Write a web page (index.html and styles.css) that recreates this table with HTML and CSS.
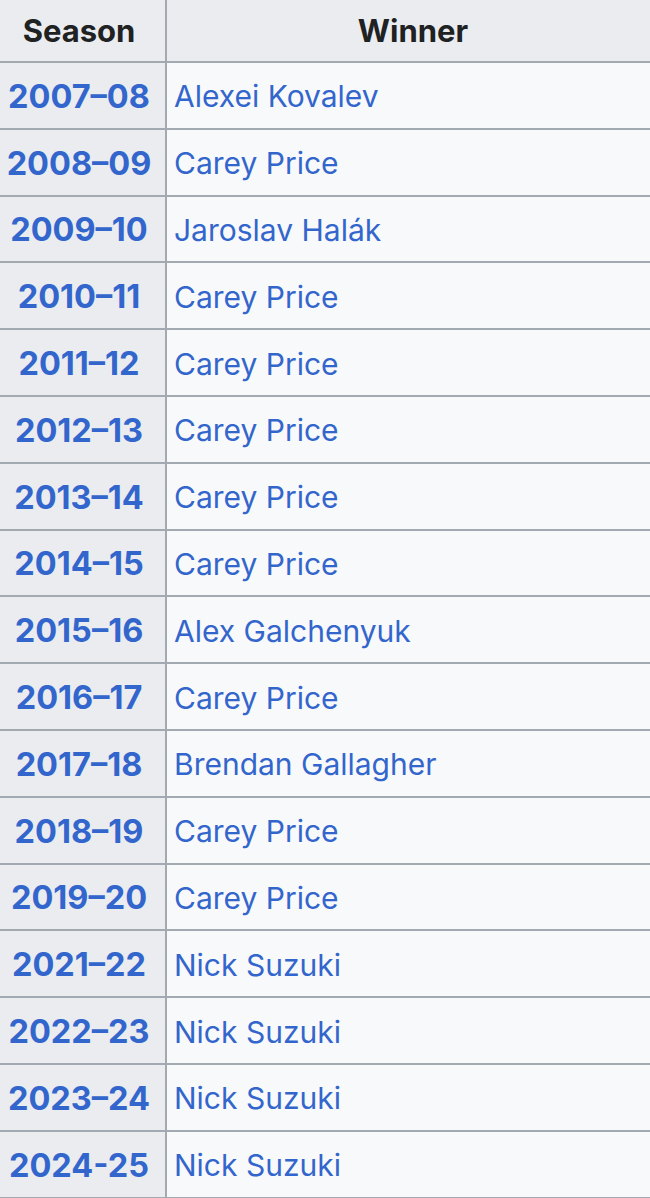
FILE: index.html
```html
<!DOCTYPE html>
<html lang="en">
<head>
<meta charset="utf-8">
<title>Winners</title>
<link rel="stylesheet" href="styles.css">
</head>
<body>
<div class="wrap">
<table class="wikitable">
  <thead>
    <tr><th class="h-season">Season</th><th class="h-winner">Winner</th></tr>
  </thead>
  <tbody>
    <tr><th><a href="#">2007–08</a></th><td><a href="#">Alexei Kovalev</a></td></tr>
    <tr><th><a href="#">2008–09</a></th><td><a href="#">Carey Price</a></td></tr>
    <tr><th><a href="#">2009–10</a></th><td><a href="#">Jaroslav Halák</a></td></tr>
    <tr><th><a href="#">2010–11</a></th><td><a href="#">Carey Price</a></td></tr>
    <tr><th><a href="#">2011–12</a></th><td><a href="#">Carey Price</a></td></tr>
    <tr><th><a href="#">2012–13</a></th><td><a href="#">Carey Price</a></td></tr>
    <tr><th><a href="#">2013–14</a></th><td><a href="#">Carey Price</a></td></tr>
    <tr><th><a href="#">2014–15</a></th><td><a href="#">Carey Price</a></td></tr>
    <tr><th><a href="#">2015–16</a></th><td><a href="#">Alex Galchenyuk</a></td></tr>
    <tr><th><a href="#">2016–17</a></th><td><a href="#">Carey Price</a></td></tr>
    <tr><th><a href="#">2017–18</a></th><td><a href="#">Brendan Gallagher</a></td></tr>
    <tr><th><a href="#">2018–19</a></th><td><a href="#">Carey Price</a></td></tr>
    <tr><th><a href="#">2019–20</a></th><td><a href="#">Carey Price</a></td></tr>
    <tr><th><a href="#">2021–22</a></th><td><a href="#">Nick Suzuki</a></td></tr>
    <tr><th><a href="#">2022–23</a></th><td><a href="#">Nick Suzuki</a></td></tr>
    <tr><th><a href="#">2023–24</a></th><td><a href="#">Nick Suzuki</a></td></tr>
    <tr><th><a href="#">2024-25</a></th><td><a href="#">Nick Suzuki</a></td></tr>
  </tbody>
</table>
</div>
</body>
</html>
```
FILE: styles.css
```css
html, body {
  margin: 0;
  padding: 0;
  background: #ffffff;
  overflow: hidden;
}

.wrap {
  width: 650px;
  height: 1198px;
  overflow: hidden;
}

.wikitable {
  border-collapse: collapse;
  margin: -2px 0 0 -9px;
  width: 670px;
  font-family: Inter, "Liberation Sans", sans-serif;
  font-size: 30px;
  color: #202122;
  background: #f8f9fa;
  table-layout: fixed;
}

.wikitable th,
.wikitable td {
  border: 2px solid #a2a9b1;
  padding: 2px 0 0 0;
  height: 62.8px;
}

.wikitable thead th {
  height: 61px;
  padding: 0;
  background: #eaecf0;
  font-weight: 700;
  font-size: 31px;
  text-align: center;
  color: #202122;
}

.h-season {
  width: 172px;
}

.wikitable tbody th {
  background: #eaecf0;
  font-weight: 700;
  font-size: 32.5px;
  text-align: center;
}

.wikitable td {
  background: #f8f9fa;
  text-align: left;
  padding-left: 7px;
}

.wikitable a {
  color: #3366cc;
  text-decoration: none;
}
```
